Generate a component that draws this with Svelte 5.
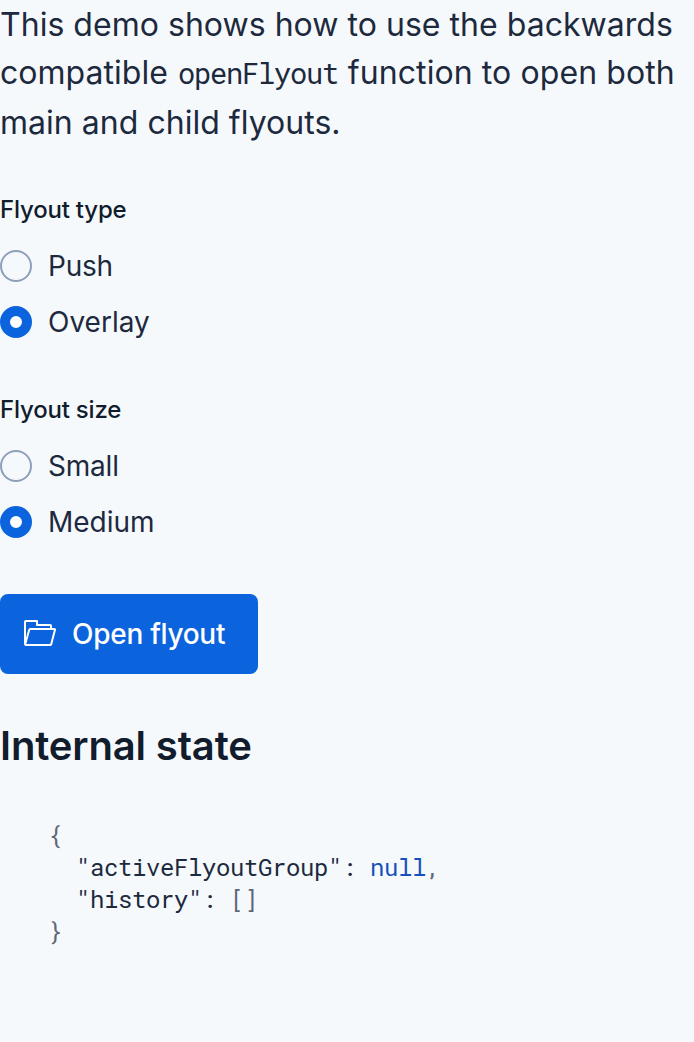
<script>
  let flyoutType = $state('Overlay');
  let flyoutSize = $state('Medium');
</script>

<main>
  <p class="intro">This demo shows how to use the backwards compatible <code>openFlyout</code> <span class="tail">function to open both</span> main and child flyouts.</p>

  <fieldset>
    <legend>Flyout type</legend>
    {#each ['Push', 'Overlay'] as option}
      <label><input type="radio" name="type" value={option} bind:group={flyoutType} /><span>{option}</span></label>
    {/each}
  </fieldset>

  <fieldset>
    <legend>Flyout size</legend>
    {#each ['Small', 'Medium'] as option}
      <label><input type="radio" name="size" value={option} bind:group={flyoutSize} /><span>{option}</span></label>
    {/each}
  </fieldset>

  <button type="button">
    <svg width="32" height="32" viewBox="0 0 32 32" fill="none" stroke="currentColor" stroke-width="2" stroke-linejoin="round">
      <path d="M1 26V3.800q0-.8.8-.8H13v4h13.200q.8 0 .8.8V11M2 27h24.200q.8 0 1-.8L31 11.800q.2-.8-.8-.8H6.200q-.8 0-1 .8L1.200 26.200q-.2.8.8.8Z" />
    </svg>
    <span>Open flyout</span>
  </button>

  <h2>Internal state</h2>

  <pre><span class="p">{'{'}</span>
  "activeFlyoutGroup": <span class="k">null</span><span class="p">,</span>
  "history": <span class="p">[]</span>
<span class="p">{'}'}</span></pre>
</main>

<style>
  :global(body) { background: #f6f9fc; }
  main { box-sizing: border-box; width: 694px; height: 1042px; padding-top: 1px; overflow: hidden; font-family: Inter, sans-serif; color: #1d2a3e; }
  .intro { margin: 0 0 47px; font-size: 32px; line-height: 48px; letter-spacing: 0.03px; }
  .tail { letter-spacing: 0.09px; }
  code { display: inline-block; height: 47px; margin: 0 0.8px 0 1px; padding-bottom: 3px; line-height: 48px; font-family: "Roboto Mono", "DejaVu Sans Mono", monospace; font-size: 28.8px; letter-spacing: -1.28px; }
  fieldset { margin: 0 0 52px; padding: 0; border: 0; min-width: 0; }
  legend { padding: 0; margin-bottom: 20px; font-size: 24px; line-height: 32px; font-weight: 500; letter-spacing: -0.19px; color: #111c2c; }
  label { display: flex; align-items: center; gap: 16px; height: 40px; margin-bottom: 16px; font-size: 28px; line-height: 40px; }
  label:last-child { margin-bottom: 0; }
  label:first-of-type { letter-spacing: -0.2px; }
  input { appearance: none; box-sizing: border-box; width: 32px; height: 32px; margin: 0; border: 2px solid #8e9fbc; border-radius: 50%; }
  input:checked { border: 10px solid #0b64dd; background: #fff; }
  button { display: flex; align-items: center; gap: 16px; width: 258px; height: 80px; padding: 0 24px; border: 0; border-radius: 8px; background: #0b64dd; color: #fff; font: 500 28px/40px Inter, sans-serif; letter-spacing: -0.28px; white-space: nowrap; }
  h2 { margin: 48px 0; font-size: 40px; line-height: 48px; font-weight: 600; letter-spacing: -0.15px; color: #111c2c; }
  pre { margin: 0; padding: 1px 48px 0; font: 24px/32px "Roboto Mono", "Liberation Mono", monospace; letter-spacing: -0.4px; }
  .p { color: #5d6877; }
  .k { color: #1750ba; }
</style>
